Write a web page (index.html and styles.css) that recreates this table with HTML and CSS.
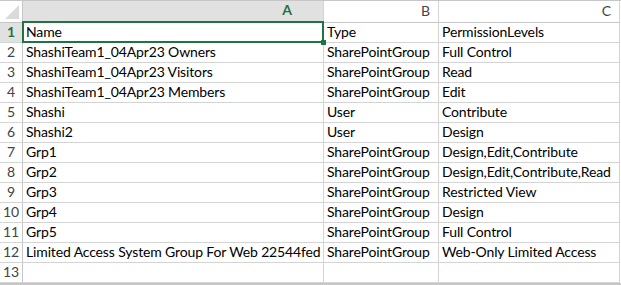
FILE: index.html
```html
<!DOCTYPE html>
<html lang="en">
<head>
  <meta charset="utf-8">
  <title>Sheet1</title>
  <link rel="stylesheet" href="styles.css">
</head>
<body>
  <div class="sheet">
    <div class="corner"><span class="corner-tri"></span></div>
    <div class="col-head col-a selected">A</div>
    <div class="col-head col-b">B</div>
    <div class="col-head col-c">C</div>

    <div class="row-head selected">1</div>
    <div class="cell active">Name<span class="handle"></span></div>
    <div class="cell">Type</div>
    <div class="cell">PermissionLevels</div>

    <div class="row-head">2</div>
    <div class="cell">ShashiTeam1_04Apr23 Owners</div>
    <div class="cell">SharePointGroup</div>
    <div class="cell">Full Control</div>

    <div class="row-head">3</div>
    <div class="cell">ShashiTeam1_04Apr23 Visitors</div>
    <div class="cell">SharePointGroup</div>
    <div class="cell">Read</div>

    <div class="row-head">4</div>
    <div class="cell">ShashiTeam1_04Apr23 Members</div>
    <div class="cell">SharePointGroup</div>
    <div class="cell">Edit</div>

    <div class="row-head">5</div>
    <div class="cell">Shashi</div>
    <div class="cell">User</div>
    <div class="cell">Contribute</div>

    <div class="row-head">6</div>
    <div class="cell">Shashi2</div>
    <div class="cell">User</div>
    <div class="cell">Design</div>

    <div class="row-head">7</div>
    <div class="cell">Grp1</div>
    <div class="cell">SharePointGroup</div>
    <div class="cell">Design,Edit,Contribute</div>

    <div class="row-head">8</div>
    <div class="cell">Grp2</div>
    <div class="cell">SharePointGroup</div>
    <div class="cell">Design,Edit,Contribute,Read</div>

    <div class="row-head">9</div>
    <div class="cell">Grp3</div>
    <div class="cell">SharePointGroup</div>
    <div class="cell">Restricted View</div>

    <div class="row-head">10</div>
    <div class="cell">Grp4</div>
    <div class="cell">SharePointGroup</div>
    <div class="cell">Design</div>

    <div class="row-head">11</div>
    <div class="cell">Grp5</div>
    <div class="cell">SharePointGroup</div>
    <div class="cell">Full Control</div>

    <div class="row-head">12</div>
    <div class="cell">Limited Access System Group For Web 22544fed</div>
    <div class="cell">SharePointGroup</div>
    <div class="cell">Web-Only Limited Access</div>

    <div class="row-head">13</div>
    <div class="cell"></div>
    <div class="cell"></div>
    <div class="cell"></div>
  </div>
</body>
</html>
```

FILE: styles.css
```css
:root {
  --grid: #d4d4d4;
  --head-line: #c6c6c6;
  --head-sel: #e1e1e1;
  --green: #217346;
  --head-text: #444;
}
* { box-sizing: border-box; }
body {
  margin: 0;
  background: #fff;
  font-family: Lato, "Liberation Sans", sans-serif;
  font-size: 14px;
  color: #000;
}
.sheet {
  display: grid;
  grid-template-columns: 23px 301px 115px 181px;
  grid-template-rows: 22px repeat(13, 20px);
  width: 621px;
  height: 285px;
  border-top: 1px solid var(--head-line);
  border-bottom: 2px solid var(--head-line);
}
.corner {
  position: relative;
  border-right: 1px solid var(--head-line);
  border-bottom: 1px solid var(--head-line);
}
.corner-tri {
  position: absolute;
  right: 3px;
  bottom: 3px;
  width: 0;
  height: 0;
  border-left: 14px solid transparent;
  border-bottom: 14px solid #dadada;
}
.col-head {
  display: flex;
  align-items: flex-end;
  justify-content: flex-end;
  padding-bottom: 2px;
  color: var(--head-text);
  border-right: 1px solid var(--grid);
  border-bottom: 1px solid var(--head-line);
  line-height: 18px;
}
.col-a { padding-right: 31px; }
.col-b { padding-right: 8px; }
.col-c { padding-right: 8px; }
.col-head.selected {
  background: var(--head-sel);
  color: var(--green);
  font-weight: bold;
  border-bottom: 2px solid var(--green);
}
.row-head {
  display: flex;
  align-items: flex-end;
  justify-content: center;
  padding-bottom: 1px;
  color: var(--head-text);
  border-right: 1px solid var(--head-line);
  border-bottom: 1px solid var(--grid);
  line-height: 18px;
}
.row-head.selected {
  background: var(--head-sel);
  color: var(--green);
  font-weight: bold;
}
.cell {
  display: flex;
  align-items: flex-end;
  padding: 0 0 1px 3px;
  white-space: nowrap;
  overflow: hidden;
  letter-spacing: -0.14px;
  border-right: 1px solid var(--grid);
  border-bottom: 1px solid var(--grid);
  line-height: 18px;
}
.cell.active {
  position: relative;
  overflow: visible;
  z-index: 1;
}
.cell.active::before {
  content: "";
  position: absolute;
  left: -1px;
  top: -2px;
  right: -1px;
  bottom: -1px;
  border: 2px solid var(--green);
}
.handle {
  position: absolute;
  right: -3px;
  bottom: -3px;
  width: 5px;
  height: 5px;
  background: var(--green);
}
```
